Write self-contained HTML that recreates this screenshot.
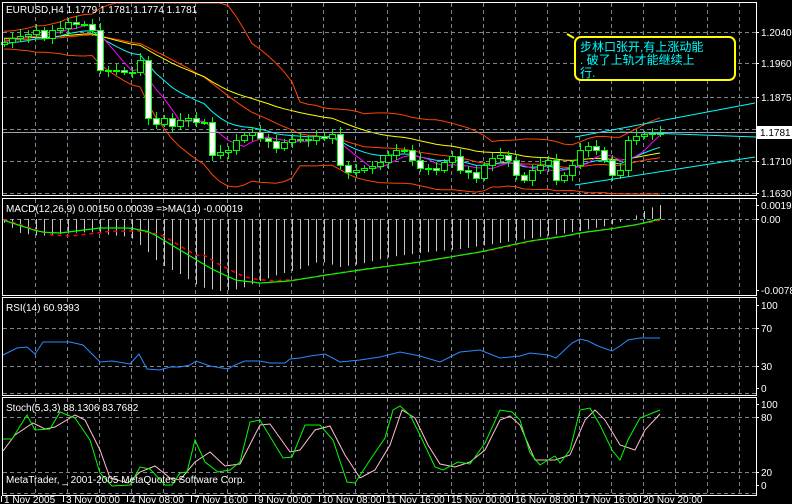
<!DOCTYPE html>
<html><head><meta charset="utf-8"><style>
html,body{margin:0;padding:0;background:#000;width:792px;height:504px;overflow:hidden}
svg{display:block}
text{font-family:"Liberation Sans","Noto Sans CJK SC",sans-serif;font-size:10px;fill:#fff}
</style></head><body>
<svg id="s" width="792" height="504" viewBox="0 0 792 504" xmlns="http://www.w3.org/2000/svg">
<rect width="792" height="504" fill="#000"/>
<g id="grid" stroke="#7a8590" stroke-dasharray="4,3" stroke-width="1"></g>
<g id="ind"></g>
<g fill="none" stroke="#fff" stroke-width="1">
<rect x="2.5" y="2.5" width="754" height="193"/>
<rect x="2.5" y="198.5" width="754" height="97"/>
<rect x="2.5" y="297.5" width="754" height="98"/>
<rect x="2.5" y="397.5" width="754" height="98"/>
</g>
<line x1="3" y1="132.5" x2="756" y2="132.5" stroke="#9aa0a8"/>
<text x="6" y="13">EURUSD,H4  1.1779 1.1781 1.1774 1.1781</text>
<text x="6" y="212">MACD(12,26,9) 0.00150 0.00039  =&gt;MA(14) -0.00019</text>
<text x="6" y="311">RSI(14) 60.9393</text>
<text x="6" y="411">Stoch(5,3,3) 88.1306 83.7682</text>
<text x="6" y="483">MetaTrader, _ 2001-2005 MetaQuotes Software Corp.</text>
<g id="axis"></g>
<rect x="757" y="126" width="35" height="13" fill="#fff"/>
<text x="760" y="136" style="fill:#000">1.1781</text>
<path d="M567,34 L574,38" stroke="#ffff00" stroke-width="2"/>
<rect x="575" y="37" width="160" height="43" rx="6" fill="#000" stroke="#ffff00" stroke-width="2"/>
<text x="580" y="51" style="fill:#00ffff;font-size:12px">步林口张开,有上涨动能</text>
<text x="580" y="64" style="fill:#00ffff;font-size:12px">. 破了上轨才能继续上</text>
<text x="580" y="77" style="fill:#00ffff;font-size:12px">行.</text>
</svg>
<script>
var NS="http://www.w3.org/2000/svg";
function el(p,t,a){var e=document.createElementNS(NS,t);for(var k in a)e.setAttribute(k,a[k]);p.appendChild(e);return e;}
var G=document.getElementById('grid'),I=document.getElementById('ind'),A=document.getElementById('axis');
for(var x=35.5;x<756;x+=32){[[3,195],[199,295],[298,395],[398,495]].forEach(function(r){el(G,'line',{x1:x,y1:r[0],x2:x,y2:r[1]});});}
[32.5,63.5,97.5,129.5,161.5,193.5,219.5,328.5,366.5,393.5,417.5,472.5,493.5].forEach(function(y){el(G,'line',{x1:3,y1:y,x2:756,y2:y});});
var ra=[[32,"1.2040"],[63,"1.1960"],[97,"1.1875"],[161,"1.1710"],[193,"1.1630"],[205,"0.00194"],[219,"0.00"],[290,"-0.0078"],[305,"100"],[328,"70"],[366,"30"],[388,"0"],[404,"100"],[417,"80"],[472,"20"],[485,"0"]];
ra.forEach(function(r){el(A,'line',{x1:756,y1:r[0]+.5,x2:759,y2:r[0]+.5,stroke:'#fff'});var t=el(A,'text',{x:761,y:r[0]+4});t.textContent=r[1];});
var bl=[[3,"1 Nov 2005"],[65,"3 Nov 00:00"],[129,"4 Nov 08:00"],[193,"7 Nov 16:00"],[257,"9 Nov 00:00"],[321,"10 Nov 08:00"],[385,"11 Nov 16:00"],[450,"15 Nov 00:00"],[514,"16 Nov 08:00"],[578,"17 Nov 16:00"],[642,"20 Nov 20:00"]];
bl.forEach(function(b){el(A,'line',{x1:b[0]-1.5,y1:496,x2:b[0]-1.5,y2:502,stroke:'#fff'});var t=el(A,'text',{x:b[0]+1,y:503});t.textContent=b[1];});
var C=[42,38,36,34,30,38,30,28,22,24,24,30,70,70,70,72,72,60,118,124,118,126,120,118,122,122,155,152,150,140,135,132,138,141,148,142,139,139,140,136,138,134,165,172,170,168,166,162,155,150,150,160,168,168,170,162,156,170,172,178,165,158,155,160,175,180,170,165,160,180,175,165,150,146,150,160,175,170,140,136,134,133,133];
var N=C.length,X=function(i){return 4+8*i;};
function ema(a,p){var k=2/(p+1),r=[a[0]];for(var i=1;i<a.length;i++)r.push(r[i-1]+k*(a[i]-r[i-1]));return r;}
function sma(a,p){var r=[];for(var i=0;i<a.length;i++){var s=0,n=0;for(var j=Math.max(0,i-p+1);j<=i;j++){s+=a[j];n++;}r.push(s/n);}return r;}
function pl(vals,col,off,extra){var p=[];vals.forEach(function(v,i){if(v!=null)p.push(X(i)+','+(v+(off||0)).toFixed(1));});var a={points:p.join(' '),fill:'none',stroke:col,'stroke-width':1};for(var k in extra)a[k]=extra[k];el(I,'polyline',a);}
function interp(kp,x){for(var i=0;i<kp.length-1;i++){if(x<=kp[i+1][0]){var t=(x-kp[i][0])/(kp[i+1][0]-kp[i][0]);return kp[i][1]+t*(kp[i+1][1]-kp[i][1]);}}return kp[kp.length-1][1];}
var pre=[40,40,40,40,40,40,40,40,40,40,40,40,40,40,40,40,40,40,40];
var all=pre.concat(C),m=sma(all,20),bu=[],bd=[],bm=[];
for(var i=0;i<N;i++){var j=i+pre.length,s=0;for(var k=j-19;k<=j;k++)s+=Math.pow(all[k]-m[j],2);var sd=Math.sqrt(s/20)+4;bm.push(m[j]);bu.push(Math.max(3,m[j]-2*sd));bd.push(Math.min(194,m[j]+2*sd));}
pl(bu,'#ff4500');pl(bd,'#ff4500');pl(bm,'#ff4500');
var ey=ema([38,38,38,38,38,38].concat(C),30).slice(6);pl(ey,'#ffff00');
pl(ema([44].concat(C),12).slice(1),'#00ffff');
pl(sma(C,5),'#ff00ff');
for(var i=0;i<N;i++){var o=i?C[i-1]:44,c=C[i];var x=X(i),hi=Math.min(o,c)-3-(i*7%5),lo=Math.max(o,c)+3+(i*3%5);
el(I,'line',{x1:x+.5,y1:hi,x2:x+.5,y2:lo,stroke:'#00ff00'});
var t=Math.min(o,c),h=Math.max(1,Math.abs(o-c));
el(I,'rect',{x:x-2.5,y:t+.5,width:6,height:h,fill:(c>o?'#fff':'#000'),stroke:'#00ff00'});}
el(I,'line',{x1:575,y1:137,x2:755,y2:103,stroke:'#00ffff'});
el(I,'line',{x1:575,y1:185,x2:755,y2:157,stroke:'#00ffff'});
el(I,'line',{x1:620,y1:132,x2:756,y2:137,stroke:'#00ffff'});
// MACD
var hk=[[3,3],[20,14],[40,17],[60,15],[90,13],[110,16],[130,18],[145,30],[160,45],[180,55],[200,68],[220,72],[240,70],[260,62],[280,55],[300,50],[320,42],[340,48],[360,45],[390,38],[420,34],[460,30],[500,24],[540,18],[580,12],[610,6],[630,0],[640,-6],[650,-11],[660,-14]];
var gk=[[3,220],[40,232],[60,233],[100,228],[130,228],[150,232],[180,250],[210,268],[235,280],[260,283],[290,281],[320,276],[360,270],[420,262],[480,252],[530,241],[560,237],[580,233],[610,229],[640,224],[660,219]];
for(var i=0;i<N;i++){var v=interp(hk,X(i));el(I,'line',{x1:X(i)+.5,y1:219,x2:X(i)+.5,y2:219+v,stroke:'#c8c8c8'});}
var rp=[],gp=[];for(var i=0;i<N;i++){var g=interp(gk,X(i));gp.push(X(i)+','+g.toFixed(1));rp.push(X(i)+','+(interp(gk,X(i)-12)+ (X(i)<200?3:-2)).toFixed(1));}
el(I,'polyline',{points:rp.join(' '),fill:'none',stroke:'#ff0000','stroke-width':1.5,'stroke-dasharray':'4,4'});
el(I,'polyline',{points:gp.join(' '),fill:'none',stroke:'#00ff00','stroke-width':1.2});
// RSI
el(I,'polyline',{fill:'none',stroke:'#2a8cff','stroke-width':1,points:"3,355 17,348 27,347 35,354 43,342 70,342 83,345 100,362 112,361 130,364 139,354 147,369 160,370 170,367 180,367 190,365 196,361 210,366 228,369 235,365 245,361 260,361 270,363 285,363 290,359 300,358 310,356 325,354 340,362 360,360 380,357 400,352 420,356 440,362 460,352 480,350 500,358 520,356 530,353 548,355 556,358 572,343 580,339 588,341 598,346 612,351 620,346 628,340 640,338 660,338"});
var sg="3,439 12,439 27,415 35,430 50,429 60,412 75,418 90,440 100,473 112,486 130,485 140,467 150,469 165,485 172,485 180,473 187,472 195,440 205,462 218,472 230,470 240,462 250,422 260,420 283,458 292,457 305,425 320,425 333,440 347,482 355,483 370,460 385,438 393,410 400,406 410,415 420,435 435,467 443,470 458,462 470,464 485,443 500,410 512,412 520,420 530,453 540,465 548,460 555,456 560,463 570,450 580,410 590,408 600,425 612,450 620,460 628,440 640,418 650,414 660,410";
var sp="3,451 15,435 33,423 45,429 55,427 75,415 85,420 100,450 110,478 128,483 140,472 155,466 170,478 180,480 195,462 210,452 225,466 240,464 260,425 270,424 290,452 300,450 315,430 330,426 345,455 360,478 375,470 390,445 402,410 415,418 428,445 440,464 455,467 470,462 485,450 500,420 510,416 520,425 535,460 555,460 570,455 585,420 595,410 605,420 620,445 635,450 645,430 660,414";
el(I,'polyline',{fill:'none',stroke:'#ffc0cb',points:sp});
el(I,'polyline',{fill:'none',stroke:'#00ff00',points:sg});
</script>
</body></html>
